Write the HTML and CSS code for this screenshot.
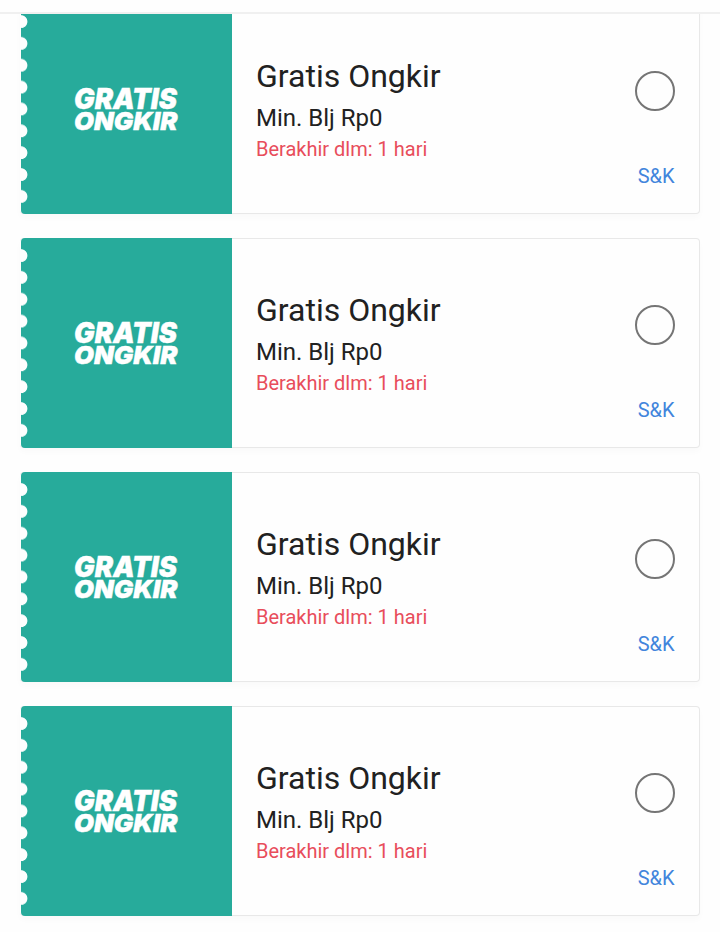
FILE: index.html
```
<!DOCTYPE html>
<html lang="id">
<head>
  <meta charset="UTF-8" />
  <meta name="viewport" content="width=device-width, initial-scale=1.0"/>
  <title>Gratis Ongkir</title>
  <link rel="stylesheet" href="styles.css">
</head>
<body>
  <div class="topbar"></div>
  <div class="voucher-list" id="voucherList">
    <div class="voucher">
      <div class="ticket">
        <svg class="logo" width="120" height="70" viewBox="0 0 120 70">
          <text class="logo-top" x="8" y="34" textLength="103" lengthAdjust="spacingAndGlyphs">GRATIS</text>
          <text class="logo-bottom" x="8" y="55" textLength="103.5" lengthAdjust="spacingAndGlyphs">ONGKIR</text>
        </svg>
      </div>
      <div class="info">
        <div class="title">Gratis Ongkir</div>
        <div class="minimum">Min. Blj Rp0</div>
        <div class="expiry">Berakhir dlm: 1 hari</div>
      </div>
      <div class="actions">
        <div class="radio"></div>
        <div class="terms">S&amp;K</div>
      </div>
    </div>
  </div>

  <script>
    // All vouchers are the same, repeat the first one
    const list = document.getElementById('voucherList');
    const voucher = list.querySelector('.voucher');
    for (let i = 0; i < 3; i++) {
      list.appendChild(voucher.cloneNode(true));
    }
  </script>
</body>
</html>
```
FILE: styles.css
```
body {
  font-family: Roboto, sans-serif;
  margin: 0;
  height: 932px;
  overflow: hidden;
  background: #fefefe;
  color: #212121;
}
.topbar {
  height: 12px;
  border-bottom: 2px solid #f0f0f0;
}
.voucher-list {
  height: 918px;
  overflow: hidden;
}
.voucher {
  display: flex;
  box-sizing: border-box;
  width: 680px;
  height: 210px;
  margin: 0 20px 24px;
  background: #fefefe;
  border: 1px solid #e8e8e8;
  border-left: none;
  border-radius: 4px;
  box-shadow: 0 4px 6px rgba(0,0,0,0.02);
}
/* the list is scrolled a little under the top bar */
.voucher:first-child {
  margin-top: -10px;
}
.ticket {
  display: flex;
  align-items: center;
  justify-content: center;
  box-sizing: border-box;
  width: 211.5px;
  height: 210px;
  margin: -1px 0 0 0.5px;
  padding-top: 1px;
  flex-shrink: 0;
  border-radius: 4px 0 0 4px;
  background: #27ab9b;
  position: relative;
}
/* punched holes on the left edge */
.ticket::before {
  content: "";
  position: absolute;
  left: -1px;
  top: 6px;
  width: 9px;
  height: 197px;
  background: radial-gradient(circle at 1px 11.6px, #fefefe 6px, transparent 6.8px) 0 0 / 9px 21.87px repeat-y;
}
.logo {
  display: block;
}
.logo text {
  font-family: Inter, sans-serif;
  font-weight: 900;
  font-style: italic;
  fill: #fff;
  stroke: #fff;
  stroke-width: 0.4px;
}
.logo-top {
  font-size: 28px;
}
.logo-bottom {
  font-size: 25px;
}
.info {
  flex: 1;
  padding: 51px 0 0 24px;
}
.title {
  font-size: 32px;
  line-height: 40px;
}
.minimum {
  margin-top: 6px;
  font-size: 24px;
  line-height: 32px;
}
.expiry {
  margin-top: 1px;
  font-size: 20px;
  line-height: 28px;
  color: #e84d5b;
}
.actions {
  display: flex;
  flex-direction: column;
  align-items: flex-end;
  padding: 66px 24px 0 0;
}
.radio {
  box-sizing: border-box;
  width: 40px;
  height: 40px;
  border: 2px solid #757575;
  border-radius: 50%;
}
.terms {
  margin: 51px 0.5px 0 0;
  font-size: 20px;
  line-height: 28px;
  color: #4285dc;
}
```
